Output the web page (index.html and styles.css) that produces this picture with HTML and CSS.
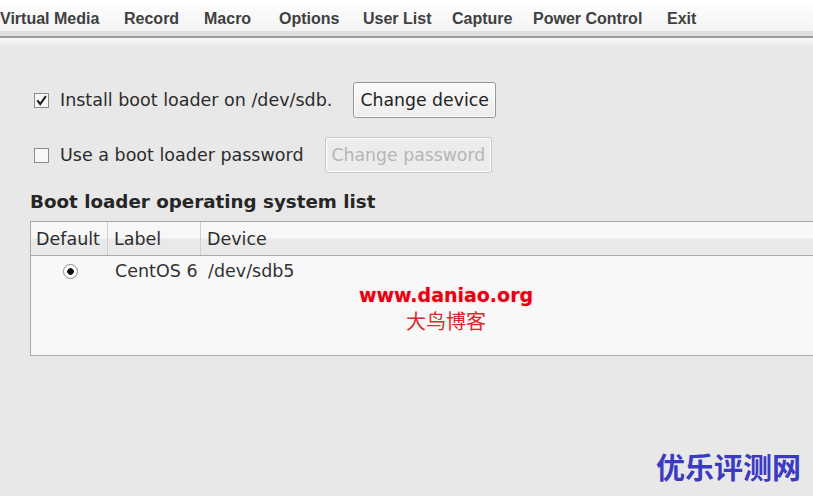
FILE: index.html
```html
<!DOCTYPE html>
<html>
<head>
<meta charset="utf-8">
<link rel="stylesheet" href="styles.css">
</head>
<body>
<div class="menubar">
  <span class="menu-item">Virtual Media</span>
  <span class="menu-item">Record</span>
  <span class="menu-item">Macro</span>
  <span class="menu-item">Options</span>
  <span class="menu-item">User List</span>
  <span class="menu-item">Capture</span>
  <span class="menu-item">Power Control</span>
  <span class="menu-item">Exit</span>
</div>
<div class="menu-shade"></div>
<div class="menu-line"></div>
<div class="menu-under"></div>

<main class="content">
  <div class="option-row">
    <span class="check"><svg viewBox="0 0 15 15" width="15" height="15"><path d="M3.3 7.4 L6.2 11 L11.9 3.1" fill="none" stroke="#1a1a1a" stroke-width="2"/></svg></span>
    <span class="option-label">Install boot loader on /dev/sdb.</span>
    <button class="btn">Change device</button>
  </div>
  <div class="option-row option-row--second">
    <span class="check"></span>
    <span class="option-label">Use a boot loader password</span>
    <button class="btn btn--disabled">Change password</button>
  </div>

  <h2 class="section-title">Boot loader operating system list</h2>

  <div class="os-table">
    <div class="os-head">
      <div class="cell cell--default">Default</div>
      <div class="cell cell--label">Label</div>
      <div class="cell cell--device">Device</div>
    </div>
    <div class="os-body">
      <div class="os-row">
        <div class="cell cell--default cell--radio"><span class="radio"></span></div>
        <div class="cell cell--label cell--body">CentOS 6</div>
        <div class="cell cell--device cell--body">/dev/sdb5</div>
      </div>
    </div>
  </div>
</main>

<div class="watermark">
  <div class="watermark-url">www.daniao.org</div>
  <div class="watermark-name">大鸟博客</div>
</div>
<div class="site-mark">优乐评测网</div>
</body>
</html>
```

FILE: styles.css
```css
html, body {
  margin: 0;
  padding: 0;
}
body {
  width: 813px;
  height: 496px;
  overflow: hidden;
  background: #e8e8e8;
  position: relative;
  font-family: "DejaVu Sans", sans-serif;
  color: #2c2c2c;
}

.menubar {
  box-sizing: border-box;
  height: 31px;
  padding-top: 10px;
  display: grid;
  grid-template-columns: 124px 80px 75px 84px 89px 81px 134px auto;
  background: linear-gradient(#ffffff, #f3f3f3);
  font: bold 16px/18px "Liberation Sans", Arial, sans-serif;
  color: #404040;
  white-space: nowrap;
}
.menu-shade {
  height: 5px;
  background: #e0e0e0;
}
.menu-line {
  height: 2px;
  background: #9c9c9c;
}
.menu-under {
  height: 7px;
  background: linear-gradient(#f8f8f8, #ececec);
}

.content {
  padding-left: 30px;
}
.option-row {
  display: flex;
  align-items: center;
  height: 36px;
  margin-top: 37px;
}
.option-row--second {
  margin-top: 19px;
}
.check {
  box-sizing: border-box;
  width: 15px;
  height: 15px;
  margin-left: 4px;
  border: 1px solid #8c8c8c;
  background: #f7f7f7;
  display: flex;
  align-items: center;
  justify-content: center;
}
.check svg {
  display: block;
  flex: none;
}
.option-label {
  margin-left: 11px;
  font-size: 17.5px;
  white-space: nowrap;
}
.btn {
  box-sizing: border-box;
  height: 36px;
  margin-left: 21px;
  padding: 0 6px;
  border: 1px solid #959595;
  border-radius: 3px;
  background: linear-gradient(#fbfbfb, #ececec);
  box-shadow: inset 0 0 0 1px #ffffff;
  font-family: "DejaVu Sans", sans-serif;
  font-size: 17.3px;
  color: #222;
  white-space: nowrap;
}
.btn--disabled {
  border-color: #c6c6c6;
  background: #ececec;
  color: #b6b6b6;
}

.section-title {
  margin: 18px 0 0 0;
  font-size: 18.3px;
  line-height: 22px;
  font-weight: bold;
  color: #262626;
}

.os-table {
  margin-top: 8px;
  margin-right: -40px;
  border: 1px solid #a9a9a9;
  background: #f8f8f8;
}
.os-head {
  display: grid;
  grid-template-columns: 77px 93px 1fr;
  height: 33px;
  background: linear-gradient(#f8f8f8 0, #f8f8f8 48%, #e9e9e9 52%, #e9e9e9 100%);
  border-bottom: 1px solid #a9a9a9;
}
.os-head .cell {
  display: flex;
  align-items: center;
  padding-left: 5px;
  font-size: 17.5px;
  color: #2e2e2e;
}
.os-head .cell--default,
.os-head .cell--label {
  border-right: 1px solid #cfcfcf;
}
.os-head .cell--label,
.os-head .cell--device {
  padding-left: 6px;
}
.os-body {
  height: 98px;
}
.os-row {
  display: grid;
  grid-template-columns: 77px 93px 1fr;
  height: 28px;
  margin-top: 1px;
}
.cell--body {
  display: flex;
  align-items: center;
  padding-left: 7px;
  font-size: 17.5px;
  color: #333;
  white-space: nowrap;
}
.cell--radio {
  display: flex;
  align-items: center;
  justify-content: center;
  padding-left: 2px;
}
.radio {
  box-sizing: border-box;
  width: 15px;
  height: 15px;
  border-radius: 50%;
  border: 1px solid #8a8a8a;
  background: radial-gradient(circle, #111 0, #111 3px, #fdfdfd 3.6px);
}

.watermark {
  position: absolute;
  left: 340px;
  top: 284px;
  width: 212px;
  text-align: center;
}
.watermark-url {
  font-family: "DejaVu Sans", sans-serif;
  font-weight: bold;
  font-size: 19px;
  line-height: 23px;
  color: #e60012;
  text-shadow: 0 0 2px #ffb0b0;
}
.watermark-name {
  margin-top: 2px;
  font-family: "Noto Sans CJK SC", sans-serif;
  font-size: 20px;
  line-height: 24px;
  color: #d42a2a;
}
.site-mark {
  position: absolute;
  right: 12px;
  top: 447px;
  font-family: "Noto Sans CJK SC", sans-serif;
  font-weight: bold;
  font-size: 29px;
  line-height: 38px;
  color: #3a3ac2;
}
```
